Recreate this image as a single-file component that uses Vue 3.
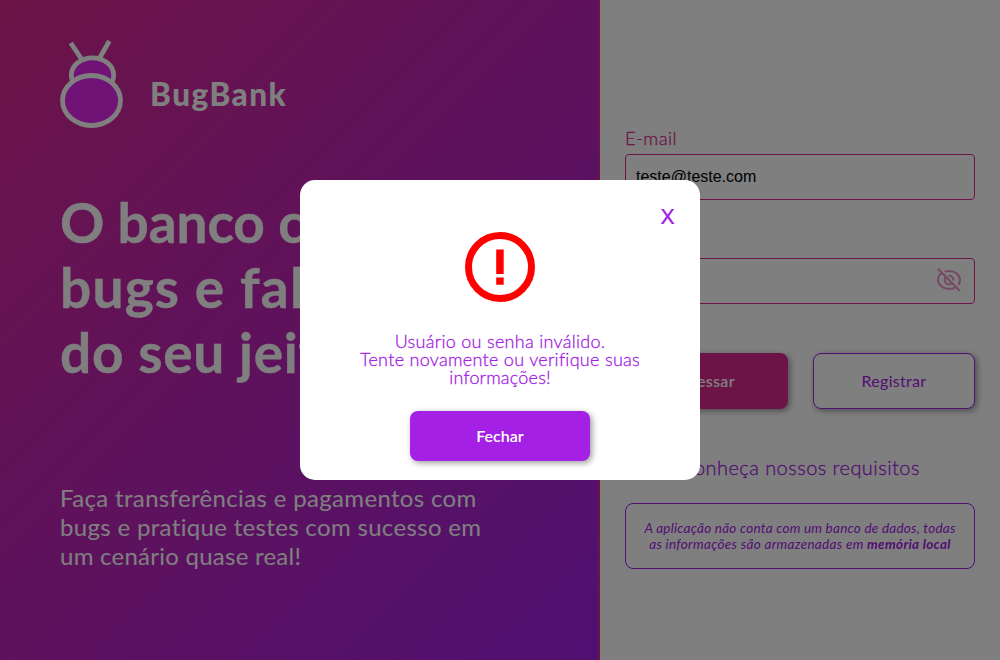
<script setup>
const titleLines = [
  { text: 'O banco com', cls: 't1' },
  { text: 'bugs e falhas', cls: 't2' },
  { text: 'do seu jeito', cls: 't3' },
]
const leadLines = [
  { text: 'Faça transferências e pagamentos com', cls: 'l1' },
  { text: 'bugs e pratique testes com sucesso em', cls: 'l2' },
  { text: 'um cenário quase real!', cls: 'l3' },
]
</script>

<template>
  <div class="page">
    <section class="intro">
      <header class="brand">
        <svg class="bug" width="64" height="88" viewBox="0 0 64 88">
          <path d="M10.800 3L21.500 19M49.300 1L39.700 18" fill="none" stroke="#fff" stroke-width="4.800" />
          <ellipse cx="32.500" cy="35" rx="21.200" ry="17.200" fill="#e224ec" stroke="#fff" stroke-width="4.800" />
          <ellipse cx="31.500" cy="60.500" rx="29" ry="25" fill="#e224ec" stroke="#fff" stroke-width="4.800" />
        </svg>
        <span class="name">BugBank</span>
      </header>
      <h1 class="title">
        <span v-for="l in titleLines" :key="l.cls" class="line"><span :class="l.cls">{{ l.text }}</span></span>
      </h1>
      <p class="lead">
        <span v-for="l in leadLines" :key="l.cls" class="line"><span :class="l.cls">{{ l.text }}</span></span>
      </p>
    </section>

    <section class="access">
      <label class="label"><span class="s-email">E-mail</span></label>
      <div class="field">teste@teste.com</div>
      <label class="label second">Senha</label>
      <div class="field">
        <svg class="eye" width="26" height="26" viewBox="0 0 26 26" fill="none" stroke="#d8288f" stroke-width="2" stroke-linecap="round">
          <path d="M2.300 2.300L23.200 23.200" />
          <path d="M5.400 6.200C3.300 7.800 2 10.200 2 13c0 4.800 4.600 9 11 9 2.200 0 4.200-.5 5.800-1.400" />
          <path d="M9.500 4.400C10.600 4.100 11.800 4 13 4c6.400 0 11 4.200 11 9 0 1.600-.5 3.100-1.500 4.400" />
          <path d="M9.200 10.500c-1.800 3.500.5 6.700 3.800 6.700 1.200 0 2.200-.3 3-1" />
          <path d="M13.200 8.800c2.200 0 4 1.700 4.100 3.900" />
        </svg>
      </div>
      <div class="actions">
        <div class="btn primary"><span class="s-enter">Acessar</span></div>
        <div class="btn outline"><span class="s-reg">Registrar</span></div>
      </div>
      <h2 class="req"><span class="s-req">Conheça nossos requisitos</span></h2>
      <div class="note">
        <span class="line"><span class="n1">A aplicação não conta com um banco de dados, todas</span></span>
        <span class="line"><span class="n2">as informações são armazenadas em <b>memória local</b></span></span>
      </div>
    </section>

    <div class="overlay">
      <div class="modal">
        <div class="close"><span>x</span></div>
        <svg class="alert" width="70" height="70" viewBox="0 0 70 70">
          <circle cx="35" cy="35" r="31.500" fill="none" stroke="#f00" stroke-width="7" />
          <path d="M31.200 17.500h7.500v24.500h-7.500zM31.200 45.500h7.500v7.200h-7.500z" fill="#f00" />
        </svg>
        <div class="message">
          <span class="line"><span class="m1">Usuário ou senha inválido.</span></span>
          <span class="line"><span class="m2">Tente novamente ou verifique suas</span></span>
          <span class="line"><span class="m3">informações!</span></span>
        </div>
        <div class="confirm"><span class="s-ok">Fechar</span></div>
      </div>
    </div>
  </div>
</template>

<style>
body { margin: 0; }
</style>

<style scoped>
* { box-sizing: border-box; }
.page {
  position: relative;
  display: flex;
  width: 1000px;
  height: 660px;
  overflow: hidden;
  background: #fff;
  font-family: Lato, "Open Sans", sans-serif;
  font-variant-ligatures: none;
}
.line { display: block; white-space: nowrap; }
.intro {
  width: 600px;
  height: 660px;
  padding: 40px 58px 0 60px;
  border-right: 2px solid #d8288f;
  background: linear-gradient(135deg, #d8288f, #a020e4) padding-box;
  color: #fff;
}
.brand { display: flex; height: 88px; }
.bug { flex: none; overflow: visible; }
.name {
  margin: 35px 0 0 26px;
  font-size: 31.500px;
  line-height: 38px;
  font-weight: 900;
  letter-spacing: 1.500px;
}
.title {
  margin: 62px 0 0;
  font-size: 55px;
  line-height: 65px;
  font-weight: 700;
  -webkit-text-stroke: .4px #fff;
}
.t1 { letter-spacing: -.1px; }
.t2 { letter-spacing: 1.200px; }
.t3 { letter-spacing: .7px; }
.lead {
  margin: 98px 0 0;
  font-size: 24px;
  line-height: 29px;
}
.l1 { letter-spacing: .34px; }
.l2 { letter-spacing: .33px; }
.l3 { letter-spacing: .25px; }
.access {
  display: flex;
  flex-direction: column;
  width: 400px;
  padding: 128px 25px 0;
}
.label { height: 26px; line-height: 20px; font-size: 18.500px; font-weight: 300; color: #d8288f; -webkit-text-stroke: .3px #d8288f; }
.s-email { letter-spacing: .4px; }
.second { margin-top: 32px; }
.field {
  display: flex;
  align-items: center;
  height: 46px;
  padding: 0 12px 0 10px;
  border: 1px solid #d8288f;
  border-radius: 4px;
  font: 16px "Liberation Sans", Arial, sans-serif;
  color: #000;
}
.eye { margin-left: auto; margin-top: -3px; opacity: .5; }
.actions { display: flex; gap: 25px; margin-top: 49px; }
.btn {
  display: flex;
  align-items: center;
  justify-content: center;
  flex: 1;
  height: 56px;
  padding-bottom: 2px;
  border-radius: 8px;
  font-size: 16px;
  box-shadow: 2px 2px 6px rgba(0, 0, 0, .4);
}
.primary { flex: 0 0 163px; background: #d8288f; color: #fff; font-weight: 600; }
.s-enter { letter-spacing: .3px; }
.outline { border: 1px solid #a420e4; color: #a420e4; background: #fff; }
.s-reg { letter-spacing: .3px; }
.req {
  margin: 45px 0 0;
  text-align: center;
  font-size: 20px;
  line-height: 26px;
  font-weight: 300;
  color: #a420e4;
  -webkit-text-stroke: .3px #a420e4;
}
.s-req { letter-spacing: .45px; }
.note {
  height: 66px;
  margin-top: 23px;
  padding-top: 16px;
  border: 1px solid #a420e4;
  border-radius: 8px;
  text-align: center;
  font-size: 13.500px;
  line-height: 16px;
  font-style: italic;
  color: #a420e4;
}
.n1 { letter-spacing: .24px; }
.n2 { letter-spacing: .31px; }
.overlay {
  position: absolute;
  inset: 0;
  display: flex;
  align-items: center;
  justify-content: center;
  background: rgba(0, 0, 0, .5);
}
.modal {
  display: flex;
  flex-direction: column;
  align-items: center;
  width: 400px;
  height: 300px;
  border-radius: 15px;
  background: #fff;
  color: #a420e4;
}
.close {
  width: 100%;
  height: 52px;
  padding: 19px 25px 0;
  text-align: right;
  font: 28px/28px "Open Sans", sans-serif;
}
.alert { flex: none; }
.message {
  margin-top: 30px;
  text-align: center;
  font-size: 18px;
  line-height: 18px;
  font-weight: 300;
  -webkit-text-stroke: .3px #a420e4;
}
.m1 { letter-spacing: .3px; }
.m2 { letter-spacing: .3px; }
.m3 { letter-spacing: .2px; }
.confirm {
  display: flex;
  align-items: center;
  justify-content: center;
  width: 180px;
  height: 50px;
  margin-top: 25px;
  padding-bottom: 2px;
  border-radius: 8px;
  background: #a420e4;
  box-shadow: 2px 2px 6px rgba(0, 0, 0, .4);
  color: #fff;
  font-size: 16px;
  font-weight: 600;
}
</style>
